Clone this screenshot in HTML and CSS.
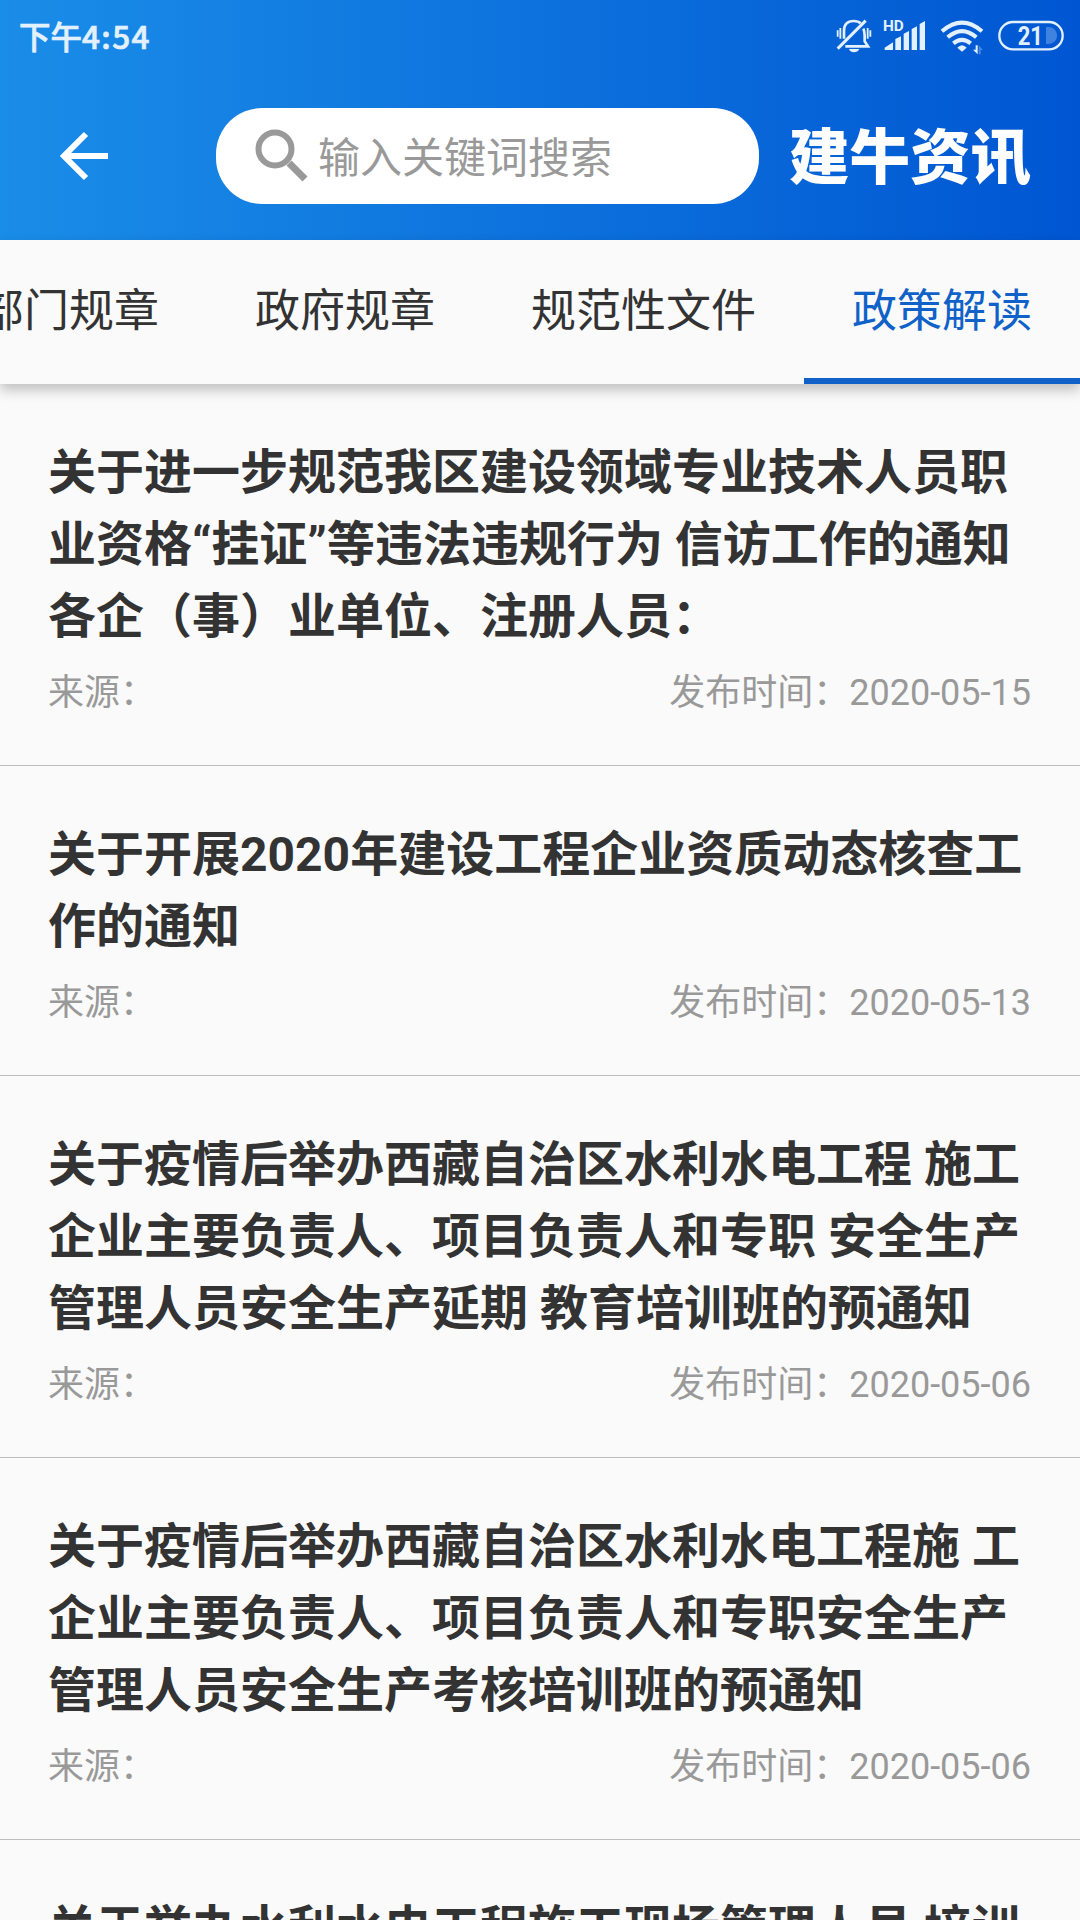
FILE: index.html
```html
<!DOCTYPE html>
<html lang="zh-CN">
<head>
<meta charset="utf-8">
<title>建牛资讯</title>
<link rel="stylesheet" href="styles.css">
</head>
<body>
<header class="header">
  <div class="status">
    <div class="clock">下午<span class="digits">4:54</span></div>
    <div class="status-icons">
      <svg class="bell" width="36" height="36" viewBox="48 54 108 108" fill="none" stroke="currentColor" stroke-width="8">
        <path d="M72 116V91Q73 63 101 63Q115 63 122 70M130 86Q134 94 134 108V124L144 139H76" />
        <path d="M137 62L53 146" stroke-width="9"/>
        <path d="M53 91V110M61 84V116M143 84V116M151 91V110" stroke-width="5.5"/>
        <path d="M87 147H118Q113 157 102 157T87 147Z" fill="currentColor" stroke="none"/>
      </svg>
      <svg class="signal" width="43" height="36" viewBox="189 54 129 108" fill="currentColor">
        <path d="M194 150V143L219 127V150ZM226 150V117L243 109V150ZM251 150V101L267 93V150ZM275 150V87L291 79V150ZM299 150V72L315 63V150Z"/>
        <text class="hd" x="189" y="93">HD</text>
      </svg>
      <svg class="wifi" width="44" height="38" viewBox="360 54 132 114" fill="none" stroke="currentColor" stroke-width="12">
        <path d="M366 94Q426 42 486 94M383 112Q426 75 469 112M400 130Q426 109 452 130"/>
        <path d="M412 143Q426 128 440 143L426 155Z" fill="currentColor" stroke="none"/>
        <path d="M459 149L467 149V136H473V163Z" fill="currentColor" stroke="none"/>
        <path d="M476 163V136L489 150H482V163Z" fill="currentColor" stroke="none" opacity=".3"/>
      </svg>
      <svg class="battery" width="66" height="31" viewBox="534 60 198 93">
        <rect x="538" y="66" width="190" height="82" rx="41" fill="none" stroke="currentColor" stroke-width="7"/>
        <path d="M678 81H686A25 25 0 0 1 686 132H678Z" fill="currentColor" opacity=".28"/>
        <text class="level" x="631" y="134" text-anchor="middle" textLength="76" lengthAdjust="spacingAndGlyphs">21</text>
      </svg>
    </div>
  </div>
  <div class="toolbar">
    <svg class="back" width="48" height="48" viewBox="0 0 48 48" fill="none" stroke="#fff" stroke-width="6"><path d="M48 24H5M26 2L4 24L26 46"/></svg>
    <div class="search">
      <svg width="54" height="54" viewBox="0 0 54 54" fill="none" stroke="#999" stroke-width="6"><circle cx="20" cy="20" r="16.5"/><path d="M34 34L50 50" stroke-width="7"/></svg>
      <span class="hint">输入关键词搜索</span>
    </div>
    <div class="brand">建牛资讯</div>
  </div>
</header>
<nav class="tabs">
  <div class="tab">部门规章</div><div class="tab">政府规章</div><div class="tab">规范性文件</div><div class="tab active">政策解读</div>
</nav>
<main class="list">
  <article class="item">
    <h2>关于进一步规范我区建设领域专业技术人员职<br>业资格“挂证”等违法违规行为 信访工作的通知<br>各企（事）业单位、注册人员：</h2>
    <div class="meta"><span>来源：</span><span>发布时间：2020-05-15</span></div>
  </article>
  <article class="item">
    <h2>关于开展2020年建设工程企业资质动态核查工<br>作的通知</h2>
    <div class="meta"><span>来源：</span><span>发布时间：2020-05-13</span></div>
  </article>
  <article class="item">
    <h2>关于疫情后举办西藏自治区水利水电工程 施工<br>企业主要负责人、项目负责人和专职 安全生产<br>管理人员安全生产延期 教育培训班的预通知</h2>
    <div class="meta"><span>来源：</span><span>发布时间：2020-05-06</span></div>
  </article>
  <article class="item">
    <h2>关于疫情后举办西藏自治区水利水电工程施 工<br>企业主要负责人、项目负责人和专职安全生产<br>管理人员安全生产考核培训班的预通知</h2>
    <div class="meta"><span>来源：</span><span>发布时间：2020-05-06</span></div>
  </article>
  <article class="item">
    <h2>关于举办水利水电工程施工现场管理人员 培训</h2>
  </article>
</main>
</body>
</html>
```
FILE: styles.css
```css
* { box-sizing: border-box; }
body {
  margin: 0;
  width: 1080px;
  height: 1920px;
  overflow: hidden;
  background: #fafafa;
  color: #333;
  font-family: Roboto, "Noto Sans CJK SC", sans-serif;
}
svg { display: block; flex: none; overflow: visible; }
.header {
  height: 240px;
  background: linear-gradient(90deg, #1a8de8, #0056d2);
}
.status {
  height: 72px;
  display: flex;
  justify-content: space-between;
  padding: 0 16px 0 19px;
  color: #e3f1ff;
}
.clock {
  font: 500 31.5px/70px "Noto Sans CJK SC", sans-serif;
  -webkit-text-stroke: .7px #e3f1ff;
}
.digits { letter-spacing: 1.4px; }
.status-icons { display: flex; padding-top: 18px; gap: 14px; }
.bell { margin-right: -3px; }
.battery { margin-top: 2px; }
.hd { font: 700 46px Roboto, sans-serif; }
.level { font: 700 76px Roboto, sans-serif; fill: currentColor; }
.toolbar {
  display: flex;
  align-items: center;
  height: 168px;
  padding: 0 0 0 60px;
  margin-top: 0;
}
.back, .search, .brand { margin-top: 0; }
.toolbar { padding-top: 0; height: 96px; margin-top: 36px; }
.search {
  display: flex;
  align-items: center;
  width: 543px;
  height: 96px;
  margin-left: 108px;
  padding-left: 39px;
  gap: 9px;
  border-radius: 46px;
  background: #fff;
  color: #999;
}
.hint { font-size: 42px; padding-bottom: 3px; }
.brand {
  margin-left: 30px;
  color: #fff;
  font: 900 60.5px/88px "Noto Sans CJK SC", sans-serif;
  padding-bottom: 6px;
  white-space: nowrap;
}
.tabs {
  position: relative;
  display: flex;
  justify-content: flex-end;
  height: 144px;
  background: #fafafa;
  box-shadow: 0 6px 12px rgba(0, 0, 0, .24);
}
.tab {
  flex: none;
  padding: 0 48px;
  font-size: 45px;
  line-height: 144px;
  white-space: nowrap;
}
.active { color: #1062c8; border-bottom: 6px solid #1062c8; }
.item { padding: 53px 49px 33px 48px; border-bottom: 1px solid #bdbdbd; }
.item h2 {
  margin: 0 0 1px;
  font-size: 48px;
  line-height: 72px;
  font-weight: 700;
  white-space: nowrap;
}
.meta {
  display: flex;
  justify-content: space-between;
  height: 78px;
  color: #999;
  font-size: 36px;
  line-height: 78px;
}
```
